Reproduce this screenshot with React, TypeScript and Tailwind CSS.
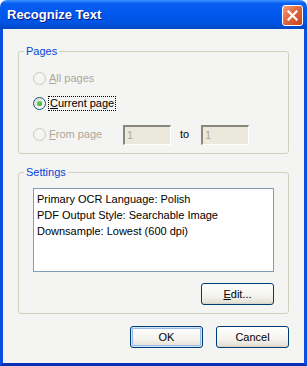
import type { ReactNode } from 'react'

function Radio({ checked, disabled }: { checked?: boolean; disabled?: boolean }) {
  return (
    <span
      className={
        'flex h-[13px] w-[13px] shrink-0 items-center justify-center rounded-full border ' +
        (disabled
          ? 'border-[#cac8bb] bg-[#f4f4f0]'
          : 'border-[#1c5180] bg-[linear-gradient(135deg,#dcd9d0,#ffffff)]')
      }
    >
      {checked && (
        <span className="h-[5px] w-[5px] rounded-full bg-[radial-gradient(circle_at_35%_35%,#63d75f,#21a121)]" />
      )}
    </span>
  )
}

function Button({ children, isDefault, className = '' }: { children: ReactNode; isDefault?: boolean; className?: string }) {
  return (
    <button
      className={
        'flex h-[22px] w-[73px] items-center justify-center rounded-[3px] border border-[#003c74] bg-[linear-gradient(to_bottom,#ffffff_0%,#f4f3ee_60%,#e6e3d8_90%,#d6d0c5_100%)] text-[11px] text-black ' +
        (isDefault ? 'shadow-[inset_0_0_0_1px_#cee7ff,inset_0_0_0_2px_#98b8ea] ' : '') +
        className
      }
    >
      {children}
    </button>
  )
}

function Field() {
  return (
    <div className="flex h-[20px] w-[48px] items-center border-l-2 border-t-2 border-b border-r border-l-[#8a887c] border-t-[#8a887c] border-b-white border-r-white bg-[#ebe9dc] pl-[2px] text-[11px] text-[#aca899]">
      1
    </div>
  )
}

export default function App() {
  return (
    <div className="flex h-[366px] w-[307px] flex-col bg-white font-['Liberation_Sans',Arial,sans-serif]">
      {/* title bar */}
      <div className="flex h-[29px] shrink-0 items-center rounded-t-[7px] bg-[linear-gradient(to_bottom,#3d95ff_0%,#0a5ef2_12%,#0058ee_45%,#0054e3_80%,#0046c2_100%)] pl-[7px] pr-[4px]">
        <span className="text-[13px] font-bold text-white [text-shadow:1px_1px_#0a1883]">Recognize Text</span>
        <div className="ml-auto mt-[1px] flex h-[21px] w-[21px] items-center justify-center rounded-[3px] border border-white bg-[linear-gradient(135deg,#f0a283_0%,#e36c45_40%,#c6411c_100%)]">
          <svg width="11" height="11" viewBox="0 0 11 11">
            <path d="M1.5 1.5 L9.5 9.5 M9.5 1.5 L1.5 9.5" stroke="#fff" strokeWidth="2.2" strokeLinecap="square" />
          </svg>
        </div>
      </div>

      {/* body */}
      <div className="flex flex-1 flex-col border-x-[3px] border-b-[3px] border-x-[#0b4fe0] border-b-[#0831b8] bg-[#f4f4f2] px-[15px] pt-[15px] text-[11px] text-black">
        <fieldset className="rounded-[3px] border border-[#d0d0bf] pb-[8px] pl-[14px]">
          <legend className="-ml-[9px] px-[2px] text-[11px] leading-[14px] text-[#0046d5]">Pages</legend>
          <div className="mt-[10px] flex h-[20px] items-center gap-[3px] text-[#aca899]">
            <Radio disabled />
            <span><u>A</u>ll pages</span>
          </div>
          <div className="mt-[5px] flex h-[20px] items-center gap-[2px]">
            <Radio checked />
            <span className="border border-dotted border-black px-[1px] leading-[13px]"><u>C</u>urrent page</span>
          </div>
          <div className="mt-[11px] flex h-[21px] items-center text-[#aca899]">
            <Radio disabled />
            <span className="ml-[3px] w-[74px]"><u>F</u>rom page</span>
            <Field />
            <span className="ml-[9px] w-[21px] text-black">to</span>
            <Field />
          </div>
        </fieldset>

        <fieldset className="mt-[11px] flex flex-col rounded-[3px] border border-[#d0d0bf] pb-[8px] pl-[14px] pr-[14px]">
          <legend className="-ml-[9px] px-[2px] text-[11px] leading-[14px] text-[#0046d5]">Settings</legend>
          <div className="mt-[9px] h-[84px] border border-[#7f9db9] bg-white px-[3px] pt-[2px] leading-[16px]">
            <div>Primary OCR Language: Polish</div>
            <div>PDF Output Style: Searchable Image</div>
            <div>Downsample: Lowest (600 dpi)</div>
          </div>
          <div className="mt-[11px] flex justify-end">
            <Button><span><u>E</u>dit...</span></Button>
          </div>
        </fieldset>

        <div className="mt-[12px] flex justify-end gap-[13px]">
          <Button isDefault>OK</Button>
          <Button>Cancel</Button>
        </div>
      </div>
    </div>
  )
}
